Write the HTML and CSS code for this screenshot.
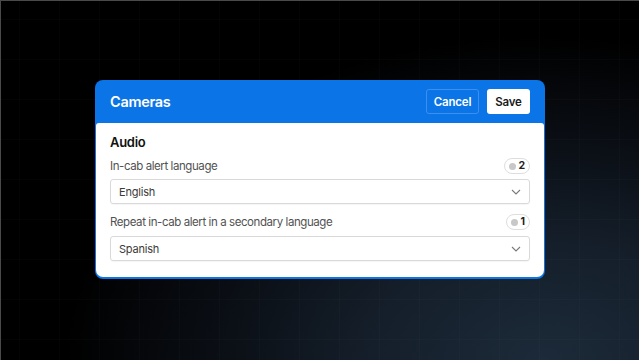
FILE: index.html
```html
<!DOCTYPE html>
<html lang="en">
<head>
    <meta charset="UTF-8">
    <meta name="viewport" content="width=device-width, initial-scale=1.0">
    <title>Cameras</title>
    <link rel="stylesheet" href="styles.css">
</head>
<body>
    <div class="dialog">
        <div class="dialog-header">
            <h1 class="dialog-title">Cameras</h1>
            <div class="actions">
                <button class="btn btn-cancel">Cancel</button>
                <button class="btn btn-save">Save</button>
            </div>
        </div>

        <div class="dialog-body">
            <h2 class="section-title">Audio</h2>

            <div class="field">
                <div class="field-label">
                    <span>In-cab alert language</span>
                    <span class="badge"><span class="badge-dot"></span>2</span>
                </div>
                <div class="select">
                    <span>English</span>
                    <svg class="chevron" width="10" height="6" viewBox="0 0 10 6"><path d="M1 1l4 4 4-4" fill="none" stroke="#7a7a7a" stroke-width="1.1"/></svg>
                </div>
            </div>

            <div class="field">
                <div class="field-label">
                    <span>Repeat in-cab alert in a secondary language</span>
                    <span class="badge"><span class="badge-dot"></span>1</span>
                </div>
                <div class="select">
                    <span>Spanish</span>
                    <svg class="chevron" width="10" height="6" viewBox="0 0 10 6"><path d="M1 1l4 4 4-4" fill="none" stroke="#7a7a7a" stroke-width="1.1"/></svg>
                </div>
            </div>
        </div>
    </div>
</body>
</html>
```

FILE: styles.css
```css
* {
    margin: 0;
    padding: 0;
    box-sizing: border-box;
}

html, body {
    height: 100%;
}

body {
    font-family: 'Inter', 'Liberation Sans', sans-serif;
    background-color: #000;
    background-image:
        linear-gradient(rgba(255, 255, 255, 0.015) 1px, transparent 1px),
        linear-gradient(90deg, rgba(255, 255, 255, 0.015) 1px, transparent 1px),
        radial-gradient(ellipse 75% 90% at 85% 100%, #1c2a39 0%, #151f2b 35%, #080b10 75%, #000 100%);
    background-size: 40px 40px, 40px 40px, 100% 100%;
    background-position: 19px 19px, 19px 19px, 0 0;
    border-top: 1px solid #4a4a4a;
    border-left: 1px solid #4a4a4a;
    display: flex;
    align-items: center;
    justify-content: center;
    overflow: hidden;
}

.dialog {
    width: 450px;
    background: #0b74e6;
    border-radius: 8px;
    padding: 0 1px 2px;
    margin-top: -2px;
}

.dialog-header {
    height: 43px;
    display: flex;
    align-items: center;
    justify-content: space-between;
    padding: 0 14px 0 14px;
}

.dialog-title {
    font-size: 14.5px;
    font-weight: 600;
    letter-spacing: -0.3px;
    color: #fff;
}

.actions {
    display: flex;
    gap: 8px;
}

.btn {
    font-family: inherit;
    font-size: 11.5px;
    font-weight: 600;
    letter-spacing: -0.2px;
    height: 25px;
    border-radius: 3px;
    cursor: pointer;
}

.btn-cancel {
    width: 53px;
    background: transparent;
    color: #fff;
    border: 1px solid #3d8fef;
}

.btn-save {
    width: 43px;
    background: #fff;
    color: #1a1a1a;
    border: none;
}

.dialog-body {
    background: #fff;
    border-radius: 3px 3px 7px 7px;
    padding: 10px 14px 16px;
}

.section-title {
    font-size: 13px;
    font-weight: 600;
    letter-spacing: -0.3px;
    color: #111;
    line-height: 18px;
}

.field {
    margin-top: 7px;
}

.field + .field {
    margin-top: 10px;
}

.field-label {
    display: flex;
    align-items: center;
    justify-content: space-between;
    font-size: 11.5px;
    letter-spacing: -0.42px;
    color: #525252;
    line-height: 16px;
}

.badge {
    display: flex;
    align-items: center;
    gap: 2px;
    height: 16px;
    padding: 0 4px 0 4px;
    border: 1px solid #dedede;
    border-radius: 8px;
    font-size: 10.5px;
    font-weight: 700;
    letter-spacing: 0;
    color: #222;
}

.badge-dot {
    width: 7px;
    height: 7px;
    border-radius: 50%;
    background: #c8c8c8;
}

.select {
    margin-top: 5px;
    height: 25px;
    border: 1px solid #d9d9d9;
    border-radius: 3px;
    box-shadow: 0 1px 1px rgba(0, 0, 0, 0.04);
    display: flex;
    align-items: center;
    justify-content: space-between;
    padding: 0 8px 0 8px;
    font-size: 11px;
    letter-spacing: -0.2px;
    color: #3a3a3a;
}

.field + .field .select {
    margin-top: 6px;
}
```
